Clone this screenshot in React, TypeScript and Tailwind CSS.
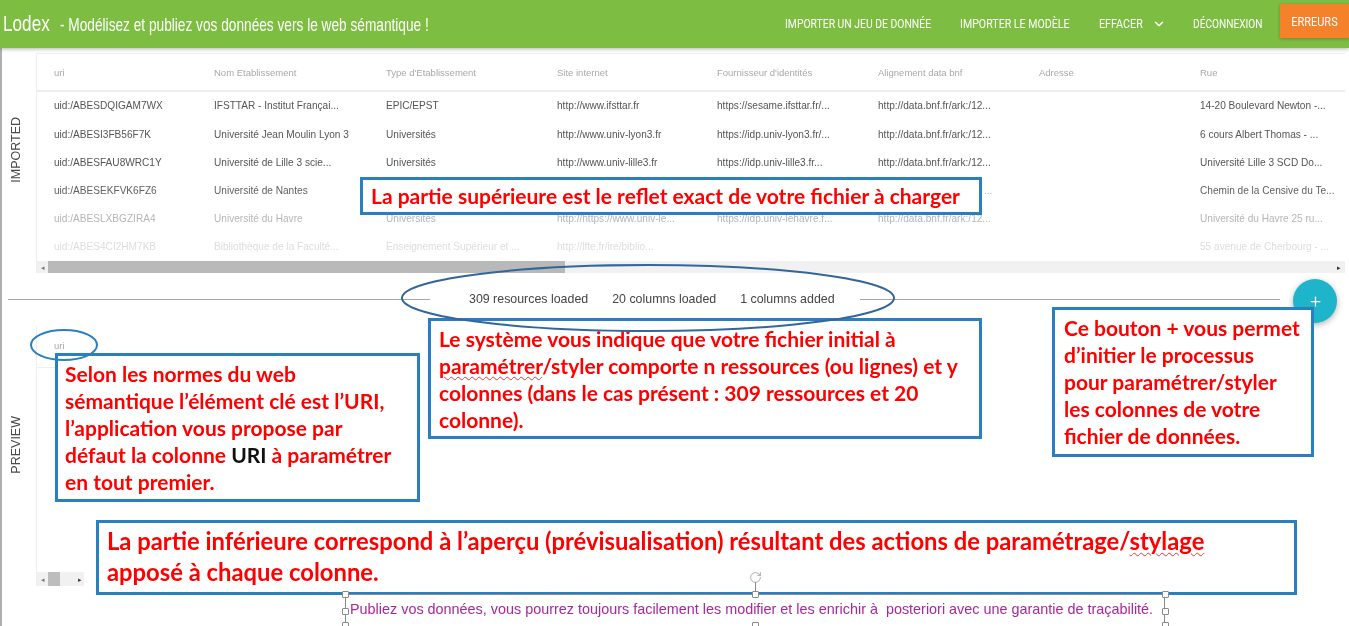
import { ChevronDown, Plus, RotateCw } from "lucide-react";

const columns = [
  "uri",
  "Nom Etablissement",
  "Type d'Etablissement",
  "Site internet",
  "Fournisseur d'identités",
  "Alignement data bnf",
  "Adresse",
  "Rue",
];

const bnf = "http://data.bnf.fr/ark:/12...";

const rows = [
  { color: "text-[#555555]", cells: ["uid:/ABESDQIGAM7WX", "IFSTTAR - Institut Françai...", "EPIC/EPST", "http://www.ifsttar.fr", "https://sesame.ifsttar.fr/...", bnf, "", "14-20 Boulevard Newton -..."] },
  { color: "text-[#555555]", cells: ["uid:/ABESI3FB56F7K", "Université Jean Moulin Lyon 3", "Universités", "http://www.univ-lyon3.fr", "https://idp.univ-lyon3.fr/...", bnf, "", "6 cours Albert Thomas - ..."] },
  { color: "text-[#555555]", cells: ["uid:/ABESFAU8WRC1Y", "Université de Lille 3 scie...", "Universités", "http://www.univ-lille3.fr", "https://idp.univ-lille3.fr...", bnf, "", "Université Lille 3 SCD Do..."] },
  // le reste de cette ligne est caché par l'annotation, seuls les points dépassent
  { color: "text-[#5f5f5f]", cells: ["uid:/ABESEKFVK6FZ6", "Université de Nantes", "", "", "", "", "", "Chemin de la Censive du Te..."], tail: true },
  { color: "text-[#b5b5b5]", cells: ["uid:/ABESLXBGZIRA4", "Université du Havre", "Universités", "http://https://www.univ-le...", "https://idp.univ-lehavre.f...", bnf, "", "Université du Havre 25 ru..."] },
  { color: "text-[#dddddd]", cells: ["uid:/ABES4CI2HM7KB", "Bibliothèque de la Faculté...", "Enseignement Supérieur et ...", "http://lfte.fr/ire/biblio...", "", "", "", "55 avenue de Cherbourg - ..."] },
];

const gridCols = "grid grid-cols-[160px_172px_171px_160px_161px_161px_161px_1fr]";

function Note({ className, children }: { className: string; children: React.ReactNode }) {
  return (
    <div className={`absolute border-[3px] border-[#2a7fc0] bg-white font-['Lato',sans-serif] font-bold text-[#ff0000] ${className}`}>
      {children}
    </div>
  );
}

function Handle({ className }: { className: string }) {
  return <div className={`absolute size-[7px] rounded-[1px] border border-[#8a8a8a] bg-white ${className}`} />;
}

function SideLabel({ className, children }: { className: string; children: React.ReactNode }) {
  return (
    <div className={`flex w-[34px] shrink-0 items-center justify-center pr-[5px] ${className}`}>
      <span className="rotate-180 text-[12.5px] text-[#4a4a4a] [writing-mode:vertical-rl]">{children}</span>
    </div>
  );
}

export default function App() {
  return (
    <div className="relative h-[626px] w-[1349px] overflow-hidden bg-white font-['Liberation_Sans',sans-serif] blur-[0.4px]">
      <header className="relative z-10 flex h-[48px] items-center bg-[#7dbd42] pl-[3px] text-white shadow-[0_1px_4px_rgba(0,0,0,0.3)]">
        <span className="w-[57px] origin-left scale-x-[0.78] text-[22px] leading-none">Lodex</span>
        <span className="w-[380px] origin-left scale-x-[0.72] whitespace-nowrap text-[19px] leading-none">- Modélisez et publiez vos données vers le web sémantique !</span>
        <nav className="ml-auto flex h-full items-center font-['Roboto',sans-serif] text-[12.5px] whitespace-nowrap">
          <span className="w-[175px] origin-left scale-x-[0.83]">IMPORTER UN JEU DE DONNÉE</span>
          <span className="w-[139px] origin-left scale-x-[0.85]">IMPORTER LE MODÈLE</span>
          <span className="flex w-[94px] items-center">
            <span className="w-[53px] origin-left scale-x-[0.86]">EFFACER</span>
            <ChevronDown className="size-[14px]" strokeWidth={2.5} />
          </span>
          <span className="w-[87px] origin-left scale-x-[0.81]">DÉCONNEXION</span>
          <span className="mb-[5px] mt-[-1px] flex h-[34px] w-[69px] items-center justify-center bg-[#f5822a] pt-[2px] shadow-[0_1px_3px_rgba(0,0,0,0.25)]">
            <span className="scale-x-[0.88]">ERREURS</span>
          </span>
        </nav>
      </header>

      <main className="flex h-[578px] flex-col border-l-2 border-[#b0b0b0]">
        <section className="flex h-[225px] pt-[5px]">
          <SideLabel className="pb-[26px]">IMPORTED</SideLabel>
          <div className="flex w-[1309px] flex-col border-l border-t border-[#eeeeee]">
            <div className={`${gridCols} h-[38px] items-center border-b-2 border-[#eeeeee] pl-[17px] pt-[3px] text-[9.5px] text-[#a8a8a8]`}>
              {columns.map((c) => (
                <span key={c}>{c}</span>
              ))}
            </div>
            <div className="flex-1">
              {rows.map((row) => (
                <div key={row.cells[0]} className={`${gridCols} h-[28.2px] items-center pl-[17px] text-[10.1px] whitespace-nowrap ${row.color}`}>
                  {row.cells.map((cell, i) => (
                    <span key={i} className={row.tail && i === 5 ? "pl-[106px] text-[#bbbbbb]" : ""}>
                      {row.tail && i === 5 ? "..." : cell}
                    </span>
                  ))}
                </div>
              ))}
            </div>
            <div className="flex h-[12px] items-center bg-[#f1f1f1]">
              <span className="w-[11px] text-center text-[7px] leading-none text-[#777777]">◂</span>
              <div className="h-full w-[517px] bg-[#b9b9b9]" />
              <span className="ml-auto w-[8px] text-[7px] leading-none text-[#333333]">▸</span>
            </div>
          </div>
        </section>

        <div className="flex h-[53px] items-center pl-[6px]">
          <div className="h-px w-[422px] bg-[#a8a8a8]" />
          <div className="flex w-[430px] gap-[24px] pl-[39px] text-[12.4px] whitespace-nowrap text-[#444444]">
            <span>309 resources loaded</span>
            <span>20 columns loaded</span>
            <span>1 columns added</span>
          </div>
          <div className="h-px w-[420px] bg-[#a8a8a8]" />
        </div>

        <section className="flex h-[260px]">
          <SideLabel className="pb-[22px]">PREVIEW</SideLabel>
          <div className="flex w-[150px] flex-col border-l border-[#eeeeee]">
            <div className="flex h-[42px] items-end border-b border-[#eeeeee] pb-[14px] pl-[17px] text-[9.5px] text-[#a8a8a8]">uri</div>
            <div className="flex-1" />
            <div className="flex h-[14px] w-[47px] items-center bg-[#f1f1f1] text-[7px] leading-none">
              <span className="w-[11px] text-center text-[#777777]">◂</span>
              <div className="h-full w-[12px] bg-[#bdbdbd]" />
              <span className="ml-auto mr-[2px] text-[#444444]">▸</span>
            </div>
          </div>
        </section>

        <div className="flex flex-1 items-start pl-[348px] pt-[15px]">
          <p className="text-[14.4px] leading-4 whitespace-nowrap text-[#a8289c]">
            Publiez vos données, vous pourrez toujours facilement les modifier et les enrichir à&nbsp; posteriori avec une garantie de traçabilité.
          </p>
        </div>
      </main>

      <button className="absolute left-[1293px] top-[279px] z-20 flex size-[44px] items-center justify-center rounded-full bg-[#1eb5ca] text-white shadow-[0_2px_6px_rgba(0,0,0,0.3)]">
        <Plus className="size-[15px]" strokeWidth={2} />
      </button>

      {/* annotations posées sur la capture */}
      <Note className="left-[360px] top-[177px] z-30 h-[38px] w-[622px] whitespace-nowrap pl-[8px] text-[21px] leading-[32px]">
        La partie supérieure est le reflet exact de votre fichier à charger
      </Note>
      <Note className="left-[428px] top-[318px] z-30 h-[121px] w-[554px] whitespace-nowrap pl-[8px] pt-[4px] text-[21px] leading-[27px]">
        Le système vous indique que votre fichier initial à
        <br />
        <span className="underline decoration-wavy decoration-[#d04040] decoration-1 underline-offset-2">paramétrer</span>/styler comporte n ressources (ou lignes) et y
        <br />
        colonnes (dans le cas présent : 309 ressources et 20
        <br />
        colonne).
      </Note>
      <Note className="left-[55px] top-[353px] z-30 h-[149px] w-[365px] whitespace-nowrap pl-[7px] pt-[4px] text-[21px] leading-[27px]">
        Selon les normes du web
        <br />
        sémantique l’élément clé est l’URI,
        <br />
        l’application vous propose par
        <br />
        défaut la colonne <span className="text-[#111111]">URI</span> à paramétrer
        <br />
        en tout premier.
      </Note>
      <Note className="left-[1052px] top-[307px] z-30 h-[150px] w-[262px] whitespace-nowrap pl-[9px] pt-[4px] text-[21px] leading-[27px]">
        Ce bouton + vous permet
        <br />
        d’initier le processus
        <br />
        pour paramétrer/styler
        <br />
        les colonnes de votre
        <br />
        fichier de données.
      </Note>
      <Note className="left-[96px] top-[520px] z-30 h-[75px] w-[1201px] whitespace-nowrap pl-[8px] pt-[3px] text-[23.8px] leading-[31px]">
        La partie inférieure correspond à l’aperçu (prévisualisation) résultant des actions de paramétrage/<span className="underline decoration-wavy decoration-[#d04040] decoration-1 underline-offset-2">stylage</span>
        <br />
        apposé à chaque colonne.
      </Note>

      {/* ellipses bleues */}
      <svg className="pointer-events-none absolute inset-0 z-40" width="1349" height="626" fill="none">
        <ellipse cx="648" cy="298" rx="246" ry="33" stroke="#33679c" strokeWidth="2" />
        <ellipse cx="64" cy="345" rx="33" ry="15" stroke="#2a7fc0" strokeWidth="2" />
      </svg>

      {/* cadre de sélection */}
      <div className="absolute left-[345px] top-[594px] z-40 h-[60px] w-[820px] border border-[#8a8a8a]" />
      <Handle className="left-[342px] top-[591px] z-40" />
      <Handle className="left-[342px] top-[608px] z-40" />
      <Handle className="left-[342px] top-[622px] z-40" />
      <Handle className="left-[752px] top-[591px] z-40" />
      <Handle className="left-[752px] top-[622px] z-40" />
      <Handle className="left-[1162px] top-[591px] z-40" />
      <Handle className="left-[1162px] top-[608px] z-40" />
      <Handle className="left-[1162px] top-[622px] z-40" />
      <div className="absolute left-[755px] top-[582px] z-40 h-[10px] w-px bg-[#8a8a8a]" />
      <RotateCw className="absolute left-[749px] top-[571px] z-40 size-[13px] text-[#9a9a9a]" strokeWidth={1.5} />
    </div>
  );
}
